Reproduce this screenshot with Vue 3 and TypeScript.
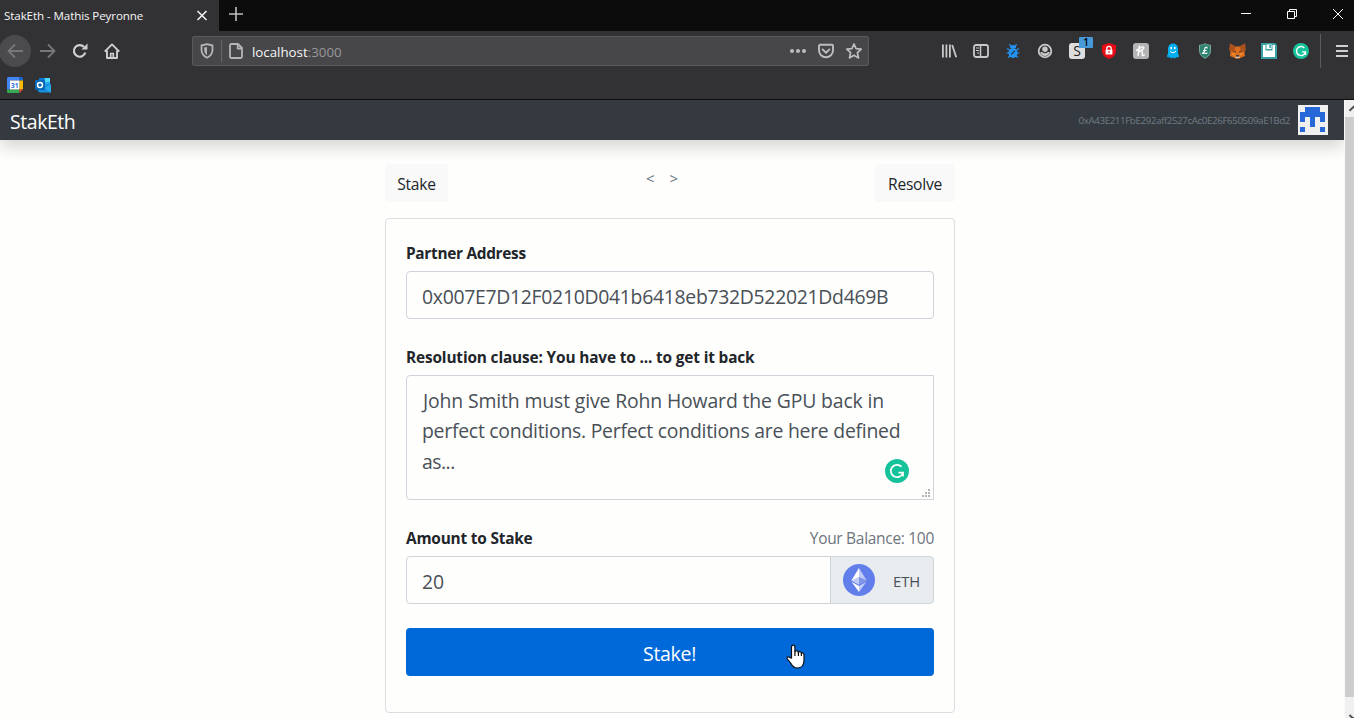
<script setup lang="ts">
import { ref } from 'vue'

const partner = ref('0x007E7D12F0210D041b6418eb732D522021Dd469B')
const clause = ['John Smith must give Rohn Howard the GPU back in', 'perfect conditions. Perfect conditions are here defined', 'as...']
const amount = ref('20')
const balance = ref(100)
const account = '0xA43E211FbE292aff2527cAc0E26F650509aE1Bd2'
</script>

<template>
  <div class="window">
    <header class="tabs">
      <div class="tab">
        <span class="tab-title">StakEth - Mathis Peyronne</span>
        <svg class="tab-close" width="12" height="12" viewBox="0 0 12 12"><path d="M1.500 1l9 9M10.500 1l-9 9" stroke="#f0f0f2" stroke-width="1.600" /></svg>
      </div>
      <svg class="tab-new" width="14" height="14" viewBox="0 0 14 14"><path d="M7 0v14M0 7h14" stroke="#bfbfc1" stroke-width="1.600" /></svg>
      <div class="controls">
        <svg width="46" height="28" viewBox="0 0 46 28"><path d="M18 13.500h10" stroke="#fff" /></svg>
        <svg width="46" height="28" viewBox="0 0 46 28" fill="none" stroke="#fff"><path d="M18.500 11.500h7v7h-7zM20.500 11V9.500h7v7H26" /></svg>
        <svg width="46" height="28" viewBox="0 0 46 28"><path d="M18 9l10 10M28 9L18 19" stroke="#fff" /></svg>
      </div>
    </header>

    <div class="toolbar">
      <div class="nav-buttons">
        <span class="slot back"><svg width="16" height="16" viewBox="0 0 16 16" fill="none" stroke="#77777a" stroke-width="1.800"><path d="M16 8H1.500M8 1.500L1.500 8 8 14.500" /></svg></span>
        <span class="slot"><svg width="16" height="16" viewBox="0 0 16 16" fill="none" stroke="#77777a" stroke-width="1.800"><path d="M0 8h14.500M8 1.500L14.500 8 8 14.500" /></svg></span>
        <span class="slot"><svg width="16" height="16" viewBox="0 0 16 16" fill="none" stroke="#cfcfd0" stroke-width="2.200"><path d="M13.300 9.500A5.800 5.800 0 1 1 12 4" /><path d="M15.500.5v6h-6z" fill="#cfcfd0" stroke="none" /></svg></span>
        <span class="slot"><svg width="16" height="16" viewBox="0 0 16 16" fill="none" stroke="#cfcfd0" stroke-width="1.900"><path d="M.7 8.600L8 1.400l7.300 7.200M3 7.500v7.500h10V7.500" stroke-linejoin="round" /><path d="M6.700 15v-4.500h2.600V15" stroke-width="1.700" /></svg></span>
      </div>

      <div class="url">
        <svg class="shield" width="14" height="16" viewBox="0 0 14 16"><path d="M7 1.200l5.500 1.300v4c0 4-2 6.600-5.500 8.200C3.500 13.100 1.500 10.500 1.500 6.500v-4z" fill="none" stroke="#b5b5b7" stroke-width="1.800" stroke-linejoin="round" /><path d="M7 4v8.200C5 10.900 4.200 9 4.200 6.500V4.600z" fill="#b5b5b7" /></svg>
        <span class="url-sep"></span>
        <svg class="page-icon" width="14" height="16" viewBox="0 0 14 16" fill="none" stroke="#b5b5b7" stroke-width="1.800" stroke-linejoin="round"><path d="M3 1h6l4 4v8.500q0 1.500-1.500 1.500h-9Q1 15 1 13.500V2.500Q1 1 2.500 1z" /><path d="M8.700 1v4.500H13" /></svg>
        <span class="url-text">localhost<i>:3000</i></span>
        <span class="url-actions">
          <svg width="16" height="16" viewBox="0 0 16 16" fill="#bdbdbf"><circle cx="2" cy="8" r="2" /><circle cx="8" cy="8" r="2" /><circle cx="14" cy="8" r="2" /></svg>
          <svg width="16" height="16" viewBox="0 0 16 16" fill="none" stroke="#bdbdbf" stroke-width="1.900" stroke-linecap="round" stroke-linejoin="round"><path d="M2.200 1.800h11.600q1.200 0 1.200 1.200v4.300a7 7 0 0 1-14 0V3q0-1.200 1.200-1.200zM4.600 6.400L8 9.700l3.400-3.300" /></svg>
          <svg width="16" height="16" viewBox="0 0 16 16" fill="none" stroke="#bdbdbf" stroke-width="1.700" stroke-linejoin="round"><path d="M8 1l2.100 4.700 5.100.5-3.800 3.500 1.100 5.200L8 12.300l-4.500 2.600 1.100-5.200L.8 6.200l5.100-.5z" /></svg>
        </span>
      </div>

      <div class="extensions">
        <span class="slot"><svg width="16" height="16" viewBox="0 0 16 16" stroke="#c8c8c9" stroke-width="1.800"><path d="M1.900 1.500v13M5.400 1.500v13M8.900 1.500v13M11.200 2l4 12.300" /></svg></span>
        <span class="slot"><svg width="16" height="16" viewBox="0 0 16 16" fill="none" stroke="#c8c8c9"><rect x="1" y="2" width="14" height="12" rx="2" stroke-width="1.800" /><path d="M7.500 2v12" stroke-width="1.500" /><path d="M3 5h3M3 7.500h3M4 10h2" stroke-width="1.200" /></svg></span>
        <span class="slot"><svg width="14" height="16" viewBox="0 0 14 16"><path d="M5 4L3.500 1M9 4l1.500-3M3.500 7L1 5.500M10.500 7L13 5.500M3 10H.5M11 10h2.500M4 13l-2 1.500M10 13l2 1.500" stroke="#2492f0" stroke-width="1.200" fill="none" /><path d="M4 5a3 3 0 0 1 6 0z" fill="#2492f0" /><ellipse cx="7" cy="10" rx="4.600" ry="5" fill="#2492f0" /><path d="M5.200 11.600l3.600-3.800" stroke="#213b5a" stroke-width="1.300" /></svg></span>
        <span class="slot"><svg width="16" height="16" viewBox="0 0 16 16"><circle cx="8" cy="8" r="6.300" fill="none" stroke="#c8c8c9" stroke-width="1.800" /><path d="M3.200 9h9.600A5 5 0 0 1 8 13a5 5 0 0 1-4.800-4z" fill="#c8c8c9" /><circle cx="8" cy="6.600" r="3.600" fill="#38383a" /><circle cx="8" cy="6.200" r="2.700" fill="#c8c8c9" /></svg></span>
        <span class="slot badge-slot"><b class="s-icon">S</b><em class="count">1</em></span>
        <span class="slot"><svg width="16" height="16" viewBox="0 0 16 16"><path d="M8 0l7 2.200v5.300c0 4-2.500 7-7 8.500-4.500-1.500-7-4.500-7-8.500V2.200z" fill="#e80b16" /><path d="M5.800 7V5.500a2.200 2.200 0 0 1 4.400 0V7" fill="none" stroke="#fff" stroke-width="1.300" /><rect x="4.600" y="6.700" width="6.800" height="4.900" rx=".6" fill="#fff" /><path d="M8 8v2" stroke="#e80b16" /></svg></span>
        <span class="slot"><svg width="16" height="16" viewBox="0 0 16 16"><rect width="16" height="16" rx="3" fill="#b4b4b5" /><path d="M6.300 3L5 12.500M5.700 9.300Q7.500 7 9 8.200c1 .9-.6 3.600.7 4.300q1 .3 1.500-.6M3.500 7.300l5-3.200q2.500-.8 2.300.8Q10.500 6.500 8.500 7" fill="none" stroke="#fff" stroke-width="1.400" stroke-linecap="round" /></svg></span>
        <span class="slot"><svg width="14" height="16" viewBox="0 0 14 16"><path d="M2 5.500a5 5 0 0 1 10 0v5l1.200 2.800-1.200 1.200-1.500-.6L9 15.600l-2-1.100-2 1.100-1.500-1.700-1.500.6-1.200-1.200L2 10.500z" fill="#00aef0" /><ellipse cx="5.200" cy="5.100" rx=".9" ry="1.300" fill="#fff" /><ellipse cx="8.800" cy="5.100" rx=".9" ry="1.300" fill="#fff" /><path d="M4.200 8a2.900 2.300 0 0 0 5.600 0" stroke="#fff" fill="none" stroke-width="1" /></svg></span>
        <span class="slot"><svg width="14" height="16" viewBox="0 0 14 16"><path d="M7 .7c2 1.200 4 1.500 5.500 1.500v5c0 4-2 6.500-5.500 8.100C3.500 13.700 1.500 11.200 1.500 7.200v-5C3 2.200 5 1.900 7 .7z" fill="#2c8170" stroke="#79a99f" stroke-width="1" /><path d="M9.300 5.500Q9.200 3.900 7.900 4.200C6.400 4.500 6.600 7 6.300 8.600 6 10.600 4.300 10.900 4.700 10.100s1.500-.2 2.500.3q1.300.4 2.100-.7M5 7.500h3.500" fill="none" stroke="#fff" stroke-width="1.200" /></svg></span>
        <span class="slot"><svg width="17" height="16" viewBox="0 0 17 16"><path d="M1 .5l5.300 3h4.400l5.300-3 .6 6-1.200 3 .7 3.500-3.700 1.500-2.500 1.200h-2.800l-2.500-1.200L.9 13l.7-3.500-1.200-3z" fill="#d96d1f" /><path d="M1 .5l5.300 3L5 9 1 8zM16 .5l-5.300 3L12 9l4-1z" fill="#a9501d" /><path d="M2 10l4.500.5L5 13.300zM15 10l-4.500.5 1.500 2.800z" fill="#f08b32" /><path d="M4.300 8l2.200.3.2 1.500zM12.700 8l-2.200.3-.2 1.500z" fill="#30292a" /><path d="M6.700 12.500h3.600l.5 2.500H6.200z" fill="#d5c2b5" /><path d="M7 12.200h3l.2 1.200H6.800z" fill="#252021" /></svg></span>
        <span class="slot"><svg width="16" height="16" viewBox="0 0 16 16"><path d="M0 0h14l2 2v14H0z" fill="#36a0a4" /><path d="M2 2h12v12H2z" fill="#fff" /><path d="M4.500 1.500h7v6h-7z" fill="#36a0a4" /><path d="M5.500 1.500h5v4.500h-5z" fill="#fff" /><path d="M8.300 2h1.500v3H8.300z" fill="#36a0a4" /></svg></span>
        <span class="slot"><svg width="16" height="16" viewBox="0 0 24 24"><circle cx="12" cy="12" r="12" fill="#15c39a" /><path d="M17 7.400A6.800 6.800 0 1 0 18.700 13.500M13.500 13.300H18.700V18" fill="none" stroke="#fff" stroke-width="2.200" /></svg></span>
      </div>
      <span class="tool-sep"></span>
      <svg class="menu" width="12" height="12" viewBox="0 0 12 12"><path d="M0 1h12M0 6h12M0 11h12" stroke="#cfcfd0" stroke-width="1.900" /></svg>
    </div>

    <div class="bookmarks">
      <svg width="16" height="16" viewBox="0 0 16 16"><path d="M1.500 0h11v3.500h-9v9H0v-11Q0 0 1.500 0z" fill="#4285f4" /><path d="M12.500 0h2Q16 0 16 1.500v2h-3.500z" fill="#1967d2" /><path d="M12.500 3.500H16v9h-3.500z" fill="#fbbc04" /><path d="M0 12.500h12.500V16h-11Q0 16 0 14.500z" fill="#34a853" /><path d="M12.500 12.500H16L12.500 16z" fill="#ea4335" /><rect x="3" y="3.500" width="9.500" height="9" fill="#fff" /><text x="7.800" y="10.600" text-anchor="middle" class="cal">31</text></svg>
      <svg width="16" height="16" viewBox="0 0 16 16"><path d="M4 1h11v8H4z" fill="#28a8ea" /><path d="M4 1h5.500v4H4z" fill="#0a78d0" /><path d="M10 1h5v4h-5z" fill="#50d9ff" /><path d="M3 8l13-1v8.500H4.500L3 14z" fill="#1490df" /><path d="M16 7.500v8L9 11z" fill="#28a8ea" /><rect y="3" width="10" height="10" rx="1" fill="#0567b5" /><circle cx="5" cy="8" r="2.500" fill="none" stroke="#fff" stroke-width="1.500" /></svg>
    </div>

    <div class="viewport">
      <div class="page">
        <nav class="navbar">
          <span class="brand">StakEth</span>
          <small class="account">{{ account }}</small>
          <svg class="identicon" width="30" height="30" viewBox="0 0 30 30"><path d="M0 0h30v30H0z" fill="#f0f0f0" /><path d="M7 2h15v5h5v10h-5v-5h-5v10h-5V12H7v5H2V7h5zM2 22h5v5H2zM22 22h5v5h-5z" fill="#2768d8" /></svg>
        </nav>

        <main class="content">
          <div class="switcher">
            <button class="light stake-tab">Stake</button>
            <small class="arrows"><span>&lt;</span><span>&gt;</span></small>
            <button class="light resolve-tab">Resolve</button>
          </div>

          <section class="card">
            <label class="l1">Partner Address</label>
            <div class="field partner">{{ partner }}</div>
            <label class="l2">Resolution clause: You have to ... to get it back</label>
            <div class="field clause">
              <div v-for="(line, i) in clause" :key="i" :class="'line' + i">{{ line }}</div>
              <svg class="grammar" width="24" height="24" viewBox="0 0 24 24"><circle cx="12" cy="12" r="12" fill="#15c39a" /><path d="M16.500 7.700A6.200 6.200 0 1 0 18 13.600M13.500 13.600H18V17.500" fill="none" stroke="#fff" stroke-width="1.700" /></svg>
              <svg class="grip" width="8" height="8" viewBox="0 0 8 8" fill="#b5b5b5"><path d="M6 0h2v2H6zM3 3h2v2H3zM6 3h2v2H6zM0 6h2v2H0zM3 6h2v2H3zM6 6h2v2H6z" /></svg>
            </div>
            <div class="amount-head"><label class="l3">Amount to Stake</label><span class="balance">Your Balance: {{ balance }}</span></div>
            <div class="group">
              <div class="field amount">{{ amount }}</div>
              <div class="unit">
                <svg width="32" height="32" viewBox="0 0 32 32"><circle cx="16" cy="16" r="16" fill="#627eea" /><path d="M16 4L8.500 16.200 16 20.600z" fill="#fff" /><path d="M16 4l7.500 12.200L16 20.600z" fill="#c0cbf7" /><path d="M16 13l7.500 3.200-7.500 4.400z" fill="#7f95e9" /><path d="M16 13l-7.500 3.200 7.500 4.400z" fill="#c0cbf7" /><path d="M16 22L8.500 17.700 16 28z" fill="#fff" /><path d="M16 22l7.500-4.300L16 28z" fill="#c0cbf7" /></svg>
                <span>ETH</span>
              </div>
            </div>
            <button class="primary"><span>Stake!</span>
              <svg class="pointer" width="20" height="26" viewBox="0 0 20 26"><path d="M5.500 14V3.200q0-2 1.700-2t1.700 2V8q.5-1.500 2-1.200 1.300.2 1.500 1.500.7-1 1.900-.5 1 .4 1.100 1.500 1-.7 1.900 0 .7.600.7 1.800v5.200c0 4.500-2.500 7.700-6.500 7.700-3.500 0-5.200-1.700-6.500-4.500L1.400 15q-.8-1.400.3-2 1.300-.6 2.400.7z" fill="#fff" stroke="#111" stroke-width="1.200" /><path d="M8.900 7.500v4.500M12.400 8v4M15.400 9v3" stroke="#111" stroke-width="1.200" /></svg>
            </button>
          </section>
        </main>
      </div>
      <div class="scrollbar">
        <div class="cap"><svg width="10" height="17" viewBox="0 0 10 17"><path d="M4.500 10.800L8.500 6.800 12.500 10.800" fill="none" stroke="#505050" stroke-width="2" /></svg></div>
        <div class="thumb"></div>
        <div class="cap end"><svg width="10" height="21" viewBox="0 0 10 21"><path d="M4.500 18L8.500 22 12.500 18" fill="none" stroke="#505050" stroke-width="2" /></svg></div>
      </div>
    </div>
  </div>
</template>

<style>
html, body { margin: 0; overflow: hidden; background: #fefefd; }
</style>

<style scoped>
.window { width: 1354px; height: 718px; display: flex; flex-direction: column; overflow: hidden; font-family: "Open Sans", "Noto Sans", sans-serif; color: #212529; }
.window * { box-sizing: border-box; }
svg { display: block; flex: none; }
button { font-family: inherit; border: 0; padding: 0; margin: 0; }
.tabs { height: 31px; flex: none; background: #0c0c0c; display: flex; }
.tab { width: 219px; background: #323234; display: flex; align-items: center; justify-content: space-between; padding: 0 11px 0 4px; }
.tab-title { font-size: 11.600px; letter-spacing: -.1px; color: #f5f5f6; white-space: nowrap; line-height: 31px; }
.tab-new { margin: 7px 0 0 10px; }
.controls { margin-left: auto; display: flex; margin-right: -7px; }
.toolbar { height: 39px; flex: none; background: #323234; display: flex; align-items: center; }
.nav-buttons { display: flex; width: 192px; margin-left: -1px; flex: none; }
.slot { width: 32px; height: 32px; display: flex; align-items: center; justify-content: center; flex: none; }
.nav-buttons .slot + .slot { padding-left: 2px; }
.back { background: #4b4b4d; border-radius: 50%; }
.url { width: 677px; height: 30px; margin-left: 1px; background: #474749; border: 1px solid #5a5a5d; border-radius: 2px; display: flex; align-items: center; padding: 0 6px 0 7px; flex: none; margin-top: 1px; }
.url-sep { width: 1px; height: 22px; background: #66666c; margin: 0 7px 0 7px; }
.url-text { font-size: 13.300px; color: #f5f5f6; margin-left: 9px; padding-top: 1px; white-space: nowrap; }
.url-text i { font-style: normal; color: #98989b; }
.url-actions { margin-left: auto; display: flex; gap: 12px; }
.extensions { display: flex; margin-left: 64px; }
.badge-slot { position: relative; }
.s-icon { width: 16px; height: 16px; background: #dedede; border-radius: 3px; color: #222; font: 14px/16px "Open Sans", sans-serif; text-align: center; }
.count { position: absolute; left: 18px; top: 2px; width: 14px; height: 11px; background: #4799d8; border-radius: 1px; color: #000; font: 600 10px/11px "Open Sans", sans-serif; text-align: center; }
.tool-sep { width: 1px; height: 34px; background: #5a5a5c; margin: 0 15px 0 3px; }
.bookmarks { height: 30px; flex: none; background: #323234; border-bottom: 1px solid #0c0c0d; display: flex; gap: 12px; padding: 7px 0 0 7px; }
.cal { font: 700 6.500px "Open Sans", sans-serif; fill: #2d6cdf; }
.viewport { flex: 1; display: flex; min-height: 0; }
.page { width: 1344px; background: #fefefd; overflow: hidden; }
.navbar { height: 40px; background: #343a40; box-shadow: 0 8px 16px rgba(0, 0, 0, .15); display: flex; align-items: center; padding: 0 16px 0 10px; }
.brand { font-size: 19.500px; letter-spacing: -.45px; color: #fff; line-height: 40px; margin-top: 4px; }
.account { margin-left: auto; margin-right: 8px; font-size: 9.800px; color: #727b83; letter-spacing: -.42px; }
.content { width: 570px; margin-left: 385px; padding-top: 24px; }
.switcher { display: flex; justify-content: space-between; height: 38px; }
.light { height: 38px; background: #f9f9fa; border-radius: 4px; font-size: 15.600px; letter-spacing: -.25px; line-height: 38px; color: #212529; padding-top: 1px; }
.stake-tab { width: 63px; }
.resolve-tab { width: 80px; }
.arrows { display: flex; gap: 15px; font-size: 15px; color: #6c757d; line-height: 28px; margin-left: 1px; }
.card { margin-top: 16px; height: 495px; border: 1px solid #dcdde0; border-radius: 4px; padding: 23px 20px 0; display: flex; flex-direction: column; }
label { font-size: 15.400px; font-weight: 700; line-height: 24px; letter-spacing: -.3px; white-space: nowrap; }
.field { border: 1px solid #ced4da; border-radius: 4px; font-size: 19.400px; color: #495057; white-space: nowrap; }
.partner { height: 48px; margin-top: 5px; padding-left: 15px; line-height: 49px; letter-spacing: -.3px; }
.l2 { margin-top: 27px; letter-spacing: -.15px; }
.l3 { letter-spacing: -.2px; }
.clause { height: 125px; margin-top: 5px; padding: 10px 0 0 15px; line-height: 30px; position: relative; border-bottom-right-radius: 0; border-top-right-radius: 0; }
.line0 { letter-spacing: -.14px; padding-left: 1px; }
.line1 { letter-spacing: -.25px; }
.line2 { letter-spacing: -.5px; padding-top: 1px; }
.grammar { position: absolute; right: 24px; top: 83px; }
.grip { position: absolute; right: 3px; bottom: 2px; }
.amount-head { display: flex; justify-content: space-between; height: 24px; margin-top: 27px; line-height: 24px; }
.balance { font-size: 15.500px; letter-spacing: -.3px; line-height: 22px; color: #6c757d; white-space: nowrap; }
.group { display: flex; margin-top: 5px; }
.amount { width: 425px; height: 48px; border-radius: 4px 0 0 4px; padding-left: 15px; line-height: 50px; }
.unit { width: 104px; height: 48px; margin-left: -1px; background: #e9ecef; border: 1px solid #ced4da; border-radius: 0 4px 4px 0; display: flex; align-items: center; gap: 18px; padding: 0 0 0 12px; font-size: 14.800px; color: #495057; }
.unit span { padding-top: 2px; }
.primary { height: 48px; margin-top: 24px; background: #0069d9; border-radius: 4px; color: #fff; font-size: 19.500px; letter-spacing: -.3px; line-height: 48px; padding: 2px 1px 0 0; position: relative; }
.pointer { position: absolute; left: 380px; top: 16px; }
.scrollbar { width: 10px; background: #f0f0f0; display: flex; flex-direction: column; border-left: 1px solid #fafafa; }
.cap { height: 17px; overflow: hidden; }
.end { height: 21px; }
.thumb { flex: 1; background: #cdcdcd; }
</style>
